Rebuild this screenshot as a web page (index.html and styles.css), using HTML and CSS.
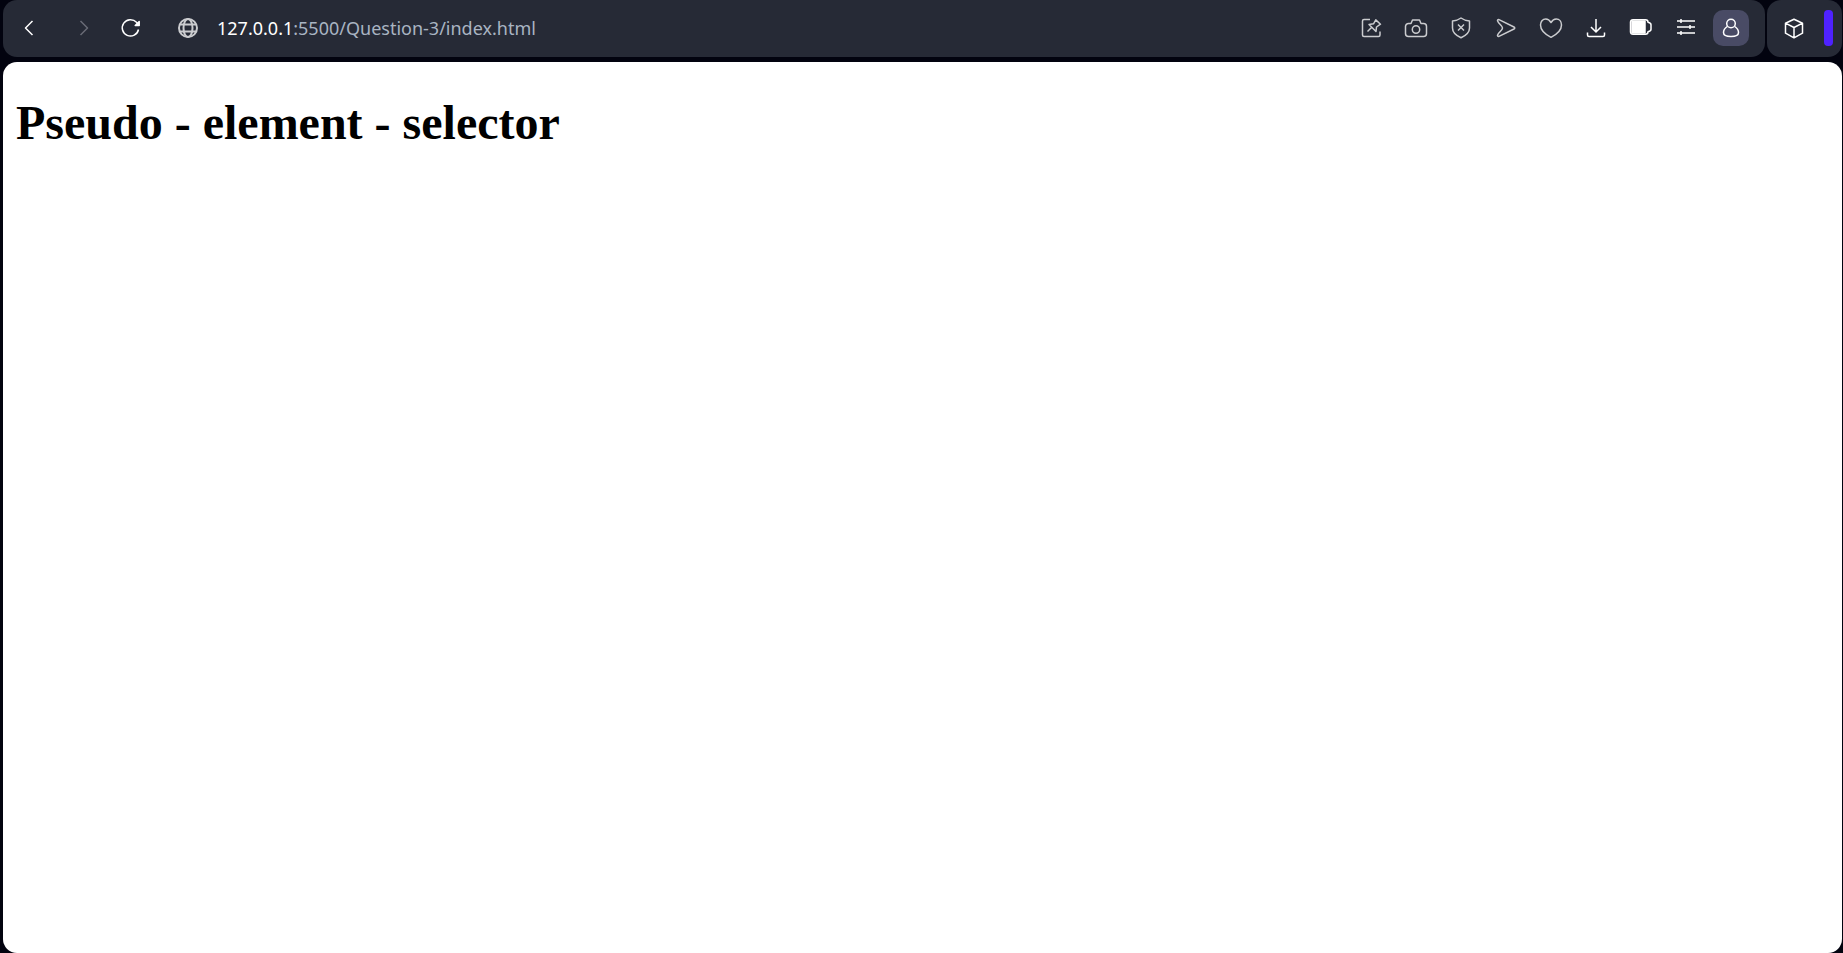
FILE: index.html
```html
<!DOCTYPE html>
<html lang="en">
<head>
<meta charset="utf-8">
<title>Pseudo - element - selector</title>
<link rel="stylesheet" href="styles.css">
</head>
<body>
<header class="chrome">
  <nav class="toolbar">
    <button class="icon-btn back" aria-label="Back"><svg viewBox="0 0 24 24"><path d="M15.500 5 8.500 12l7 7"/></svg></button>
    <button class="icon-btn forward" aria-label="Forward" disabled><svg viewBox="0 0 24 24"><path d="m8.500 5 7 7-7 7"/></svg></button>
    <button class="icon-btn reload" aria-label="Reload"><svg viewBox="0 0 24 24"><path d="M19.500 13.500A8.200 8.200 0 1 1 17.500 6.300L19 8"/><path class="solid" d="M20.200 5.500v4h-4z"/></svg></button>
    <button class="icon-btn site" aria-label="Site information"><svg viewBox="0 0 24 24"><circle cx="12" cy="12" r="9"/><ellipse cx="12" cy="12" rx="4.500" ry="9"/><path d="M4 8.500h16M4 15.500h16"/></svg></button>
    <div class="address" role="textbox" aria-label="Address"><span class="host">127.0.0.1</span>:5500/Question-3/index.html</div>
    <div class="actions">
      <button class="icon-btn soft" aria-label="Pin page"><svg viewBox="0 0 24 24"><path d="M11 3.500H5A1.500 1.500 0 0 0 3.500 5v14A1.500 1.500 0 0 0 5 20.500h14.500A1.500 1.500 0 0 0 21 19v-3.500M8.500 15.500l4-4M10 8.500l4.500-.7 2.300-3.900 4.700 4.300-4 2.800-.5 4.500z"/></svg></button>
      <button class="icon-btn soft" aria-label="Snapshot"><svg viewBox="0 0 24 24"><path d="M4.500 7.500H7L8.500 4h7L17 7.500h2.500a3 3 0 0 1 3 3v7a3 3 0 0 1-3 3h-15a3 3 0 0 1-3-3v-7a3 3 0 0 1 3-3z"/><circle cx="12" cy="13.500" r="3.700"/></svg></button>
      <button class="icon-btn soft" aria-label="Shield"><svg viewBox="0 0 24 24"><path d="M12 2c2.500 1.800 5.500 2.700 8.500 3v7c0 5-3.500 7.500-8.500 9.800C7 19.500 3.500 17 3.500 12V5c3-.3 6-1.200 8.500-3z"/><path d="m9 8.500 6 6m0-6-6 6"/></svg></button>
      <button class="icon-btn soft" aria-label="Send"><svg viewBox="0 0 24 24"><path d="M5 3.700 20 11c1 .5 1 1.500 0 2L5 20.300c-1 .4-1.800-.3-1.400-1.300C4.800 16 8.500 14.500 8.500 12S4.800 8 3.600 5C3.200 4 4 3.300 5 3.700z"/></svg></button>
      <button class="icon-btn soft" aria-label="Bookmark"><svg viewBox="0 0 24 24"><path d="M12 6.500C10.500 4 8.800 3 6.800 3 3.600 3 1.500 5.600 1.500 9c0 5 5 9.500 10.500 12.300C17.500 18.500 22.500 14 22.500 9c0-3.400-2.100-6-5.300-6-2 0-3.700 1-5.200 3.500z"/></svg></button>
      <button class="icon-btn" aria-label="Downloads"><svg viewBox="0 0 24 24"><path d="M12 3v13M7 11l5 5 5-5M3.500 16.500V19a1.500 1.500 0 0 0 1.500 1.500h14a1.500 1.500 0 0 0 1.500-1.500v-2.500"/></svg></button>
      <button class="icon-btn battery" aria-label="Battery saver"><svg viewBox="0 0 24 24"><path d="M4 3.700h12.500A2.500 2.500 0 0 1 19 6.200c1.500.3 3 1.200 3 2.500v4.600c0 1.300-1.500 2.200-3 2.500a2.500 2.500 0 0 1-2.500 2.500H4A2.500 2.500 0 0 1 1.500 16V6A2.500 2.500 0 0 1 4 3.700z"/><path class="solid" d="M3 5h13v12H3z"/></svg></button>
      <button class="icon-btn" aria-label="Easy setup"><svg viewBox="0 0 24 24"><path d="M3 5h18M3 11h18M3 17h18M7 3v4M16 9v4M7 15v4"/></svg></button>
      <button class="icon-btn profile" aria-label="Profile"><svg viewBox="0 0 24 24"><circle cx="12" cy="7.500" r="4.300"/><path d="M8.200 10.500C6 12 4.500 14 4.500 16.500c0 2.800 3 4 7.500 4s7.500-1.200 7.500-4c0-2.500-1.500-4.500-3.700-6"/></svg></button>
    </div>
  </nav>
  <aside class="side">
    <button class="icon-btn" aria-label="Extensions"><svg viewBox="0 0 24 24"><path d="m12 3.200 8.500 4v10L12 21.800l-8.500-4.600v-10zM3.500 7.200l8.500 4.300 8.500-4.300M12 11.500v10.300"/></svg></button>
    <button class="accent" aria-label="Open side panel"></button>
  </aside>
</header>
<main class="page">
  <h1>Pseudo - element - selector</h1>
</main>
</body>
</html>
```

FILE: styles.css
```css
* {
  box-sizing: border-box;
}

body {
  margin: 0;
  min-height: 100vh;
  display: flex;
  flex-direction: column;
  gap: 5px;
  padding: 0 1px 0 3px;
  background: #02030f;
}

.chrome {
  display: flex;
  gap: 2px;
}

.toolbar,
.side {
  display: flex;
  align-items: center;
  padding: 10px 9px 11px;
  background: #262a36;
  border-radius: 14px;
}

.toolbar {
  flex: 1;
  padding-left: 8px;
  padding-right: 16px;
}

.icon-btn {
  display: grid;
  place-items: center;
  flex: none;
  width: 36px;
  height: 36px;
  padding: 0;
  border: 0;
  border-radius: 10px;
  background: none;
  color: #fff;
}

.icon-btn svg {
  width: 24px;
  height: 24px;
  fill: none;
  stroke: currentColor;
  stroke-width: 1.5;
  stroke-linejoin: round;
}

.icon-btn .solid {
  fill: currentColor;
}

.soft {
  color: #cbcccf;
}

.forward {
  margin-left: 19px;
  color: #686b76;
}

.reload {
  margin-left: 11px;
}

.site {
  margin-left: 21px;
  color: #cbcccf;
}

.site svg {
  stroke-width: 2;
}

.address {
  flex: 1;
  margin-left: 11px;
  font: 18px/28px "Noto Sans", "Open Sans", sans-serif;
  color: #a9b4c2;
  white-space: nowrap;
}

.host {
  color: #fff;
}

.actions {
  display: flex;
  gap: 9px;
}

.profile {
  background: #494b65;
}

.side {
  gap: 12px;
}

.accent {
  width: 9px;
  height: 36px;
  padding: 0;
  border: 0;
  border-radius: 4px;
  background: #4f22ff;
}

.page {
  flex: 1;
  padding: 33px 13px;
  border-radius: 14px;
  background: #fff;
}

h1 {
  margin: 0;
  font: bold 48px/56px "Liberation Serif", serif;
  color: #000;
}
```
